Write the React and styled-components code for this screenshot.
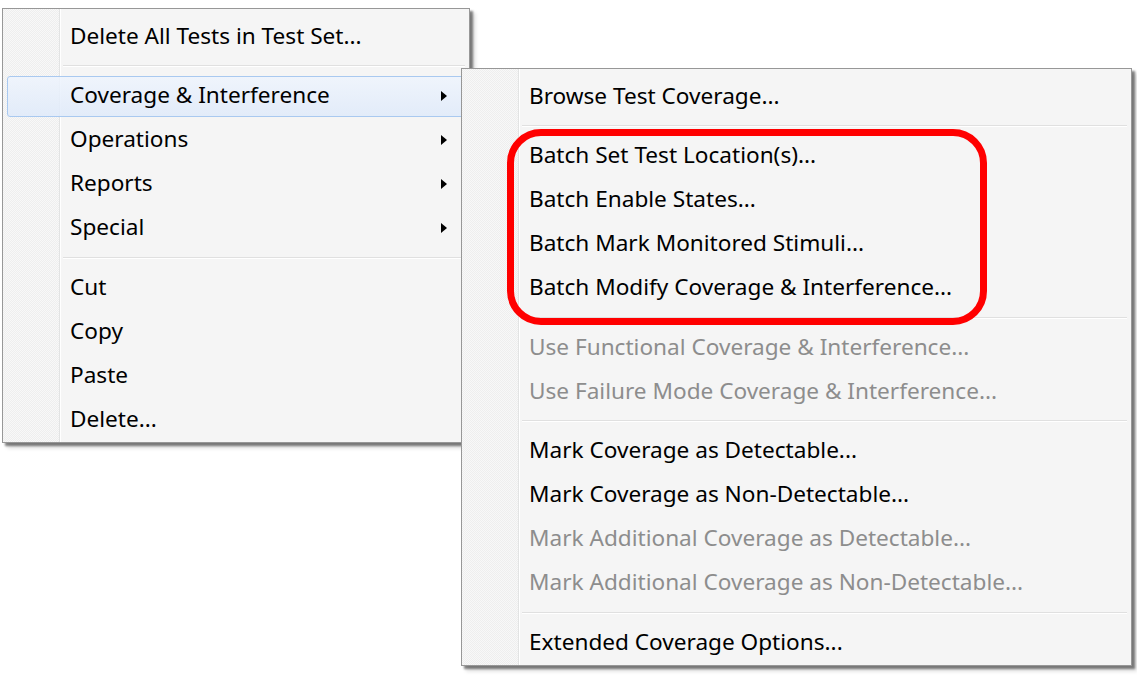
import React from 'react';
import styled, { createGlobalStyle } from 'styled-components';

const GlobalStyle = createGlobalStyle`
  html, body {
    margin: 0;
    padding: 0;
    background: #ffffff;
  }
  body {
    font-family: "Noto Sans", "Open Sans", "DejaVu Sans", sans-serif;
  }
`;

const Stage = styled.div`
  position: relative;
  width: 1137px;
  height: 675px;
  overflow: hidden;
  background: #ffffff;
`;

const Menu = styled.div`
  position: absolute;
  left: ${p => p.$x}px;
  top: ${p => p.$y}px;
  width: ${p => p.$w}px;
  box-sizing: border-box;
  padding: 5px 4px 1px;
  background: #f5f5f5;
  border: 1px solid #979797;
  box-shadow: 3px 3px 2px rgba(0, 0, 0, 0.45), 5px 5px 4px rgba(0, 0, 0, 0.15);

  &::before {
    content: '';
    position: absolute;
    left: 0;
    top: 0;
    bottom: 0;
    width: 56px;
    background: repeating-conic-gradient(#eeeeee 0 25%, #f8f8f8 0 50%) 0 0 / 2px 2px;
    border-right: 1px solid #e2e3e3;
    box-shadow: 1px 0 0 #ffffff;
  }
`;

const Item = styled.div`
  position: relative;
  height: 44px;
  box-sizing: border-box;
  display: flex;
  align-items: center;
  padding: 0 18px 2px 63px;
  font-size: 22.6px;
  color: ${p => (p.$disabled ? '#8d8d8d' : '#000000')};
  white-space: nowrap;

  &::before {
    content: '';
    display: ${p => (p.$active ? 'block' : 'none')};
    position: absolute;
    left: 0;
    right: 0;
    top: 2px;
    bottom: 1px;
    border: 1px solid #a9c9f0;
    border-radius: 3px;
    background: linear-gradient(rgba(238, 244, 253, 0.85), rgba(223, 234, 250, 0.85));
  }
`;

const Label = styled.span`
  position: relative;
  flex: 1;
`;

const Arrow = styled.span`
  position: relative;
  width: 0;
  height: 0;
  margin-top: 2px;
  border-top: 5.5px solid transparent;
  border-bottom: 5.5px solid transparent;
  border-left: 6px solid #000000;
`;

const Separator = styled.div`
  position: relative;
  height: 15.5px;

  &::after {
    content: '';
    position: absolute;
    left: 56px;
    right: 0;
    top: 7px;
    border-top: 1px solid #e0e0e0;
    border-bottom: 1px solid #ffffff;
  }
`;

const Highlight = styled.div`
  position: absolute;
  left: 507px;
  top: 129px;
  width: 480px;
  height: 196px;
  box-sizing: border-box;
  border: 7px solid #ff0000;
  border-radius: 34px;
  pointer-events: none;
`;

const mainItems = [
  { label: 'Delete All Tests in Test Set...' },
  { sep: true },
  { label: 'Coverage & Interference', sub: true, active: true },
  { label: 'Operations', sub: true },
  { label: 'Reports', sub: true },
  { label: 'Special', sub: true },
  { sep: true },
  { label: 'Cut' },
  { label: 'Copy' },
  { label: 'Paste' },
  { label: 'Delete...' }
];

const subItems = [
  { label: 'Browse Test Coverage...' },
  { sep: true },
  { label: 'Batch Set Test Location(s)...' },
  { label: 'Batch Enable States...' },
  { label: 'Batch Mark Monitored Stimuli...' },
  { label: 'Batch Modify Coverage & Interference...' },
  { sep: true },
  { label: 'Use Functional Coverage & Interference...', disabled: true },
  { label: 'Use Failure Mode Coverage & Interference...', disabled: true },
  { sep: true },
  { label: 'Mark Coverage as Detectable...' },
  { label: 'Mark Coverage as Non-Detectable...' },
  { label: 'Mark Additional Coverage as Detectable...', disabled: true },
  { label: 'Mark Additional Coverage as Non-Detectable...', disabled: true },
  { sep: true },
  { label: 'Extended Coverage Options...' }
];

const renderItems = items =>
  items.map((item, i) =>
    item.sep ? (
      <Separator key={i} />
    ) : (
      <Item key={i} $active={item.active} $disabled={item.disabled}>
        <Label>{item.label}</Label>
        {item.sub && <Arrow />}
      </Item>
    )
  );

export default function App() {
  return (
    <Stage>
      <GlobalStyle />
      <Menu $x={2} $y={8} $w={468}>
        {renderItems(mainItems)}
      </Menu>
      <Menu $x={461} $y={68} $w={671}>
        {renderItems(subItems)}
      </Menu>
      <Highlight />
    </Stage>
  );
}
